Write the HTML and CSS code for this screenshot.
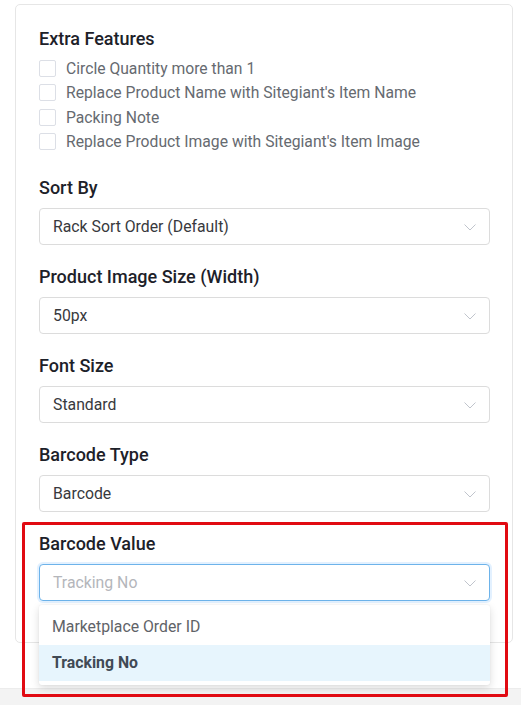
FILE: index.html
```html
<!DOCTYPE html>
<html>
<head>
<meta charset="utf-8">
<link rel="stylesheet" href="styles.css">
</head>
<body>
<div class="page">
  <div class="card">
    <div class="section first">
      <div class="label">Extra Features</div>
      <div class="checks">
        <label class="check"><span class="box"></span><span class="ctext">Circle Quantity more than 1</span></label>
        <label class="check"><span class="box"></span><span class="ctext">Replace Product Name with Sitegiant's Item Name</span></label>
        <label class="check"><span class="box"></span><span class="ctext">Packing Note</span></label>
        <label class="check"><span class="box"></span><span class="ctext">Replace Product Image with Sitegiant's Item Image</span></label>
      </div>
    </div>
    <div class="section">
      <div class="label">Sort By</div>
      <div class="select"><span class="value">Rack Sort Order (Default)</span><svg class="chev" width="12" height="12" viewBox="0 0 12 12"><path d="M0.5 3.5 L6 9 L11.5 3.5" fill="none" stroke="#c0c4cc" stroke-width="1"/></svg></div>
    </div>
    <div class="section">
      <div class="label">Product Image Size (Width)</div>
      <div class="select"><span class="value">50px</span><svg class="chev" width="12" height="12" viewBox="0 0 12 12"><path d="M0.5 3.5 L6 9 L11.5 3.5" fill="none" stroke="#c0c4cc" stroke-width="1"/></svg></div>
    </div>
    <div class="section">
      <div class="label">Font Size</div>
      <div class="select"><span class="value">Standard</span><svg class="chev" width="12" height="12" viewBox="0 0 12 12"><path d="M0.5 3.5 L6 9 L11.5 3.5" fill="none" stroke="#c0c4cc" stroke-width="1"/></svg></div>
    </div>
    <div class="section">
      <div class="label">Barcode Type</div>
      <div class="select"><span class="value">Barcode</span><svg class="chev" width="12" height="12" viewBox="0 0 12 12"><path d="M0.5 3.5 L6 9 L11.5 3.5" fill="none" stroke="#c0c4cc" stroke-width="1"/></svg></div>
    </div>
    <div class="section last">
      <div class="label">Barcode Value</div>
      <div class="select-wrap">
        <div class="select focused"><span class="value placeholder">Tracking No</span><svg class="chev" width="12" height="12" viewBox="0 0 12 12"><path d="M0.5 3.5 L6 9 L11.5 3.5" fill="none" stroke="#c0c4cc" stroke-width="1"/></svg></div>
        <div class="menu">
          <div class="option">Marketplace Order ID</div>
          <div class="option selected">Tracking No</div>
        </div>
      </div>
    </div>
  </div>
  <div class="footer"></div>
  <div class="highlight"></div>
</div>
</body>
</html>
```
FILE: styles.css
```css
* { box-sizing: border-box; }
html, body {
  margin: 0;
  padding: 0;
  background: #ffffff;
  font-family: Roboto, "Liberation Sans", Arial, sans-serif;
}
.page {
  position: relative;
  width: 521px;
  height: 705px;
  overflow: hidden;
  padding-top: 4px;
}
.card {
  margin-left: 15px;
  width: 498px;
  border: 1px solid #e6e6e6;
  border-radius: 5px;
  padding: 22px 22px 41px 23px;
  background: #fff;
}
.section { margin-top: 20px; }
.section.first { margin-top: 0; margin-bottom: 22px; }
.label {
  font-size: 18px;
  line-height: 24px;
  font-weight: 500;
  color: #1d2129;
  margin-bottom: 8px;
}
.section.first .label { margin-bottom: 5px; }
.checks { display: flex; flex-direction: column; }
.check {
  display: flex;
  align-items: center;
  height: 24.5px;
}
.box {
  width: 17px;
  height: 17px;
  border: 1px solid #dcdfe6;
  border-radius: 2px;
  background: #fff;
  margin-right: 10px;
  flex: none;
}
.ctext {
  font-size: 15.7px;
  color: #666a70;
}
.select {
  height: 37px;
  border: 1px solid #dcdcdc;
  border-radius: 4px;
  display: flex;
  align-items: center;
  justify-content: space-between;
  padding: 0 13px 0 13px;
  background: #fff;
}
.select .value {
  font-size: 15.8px;
  color: #38393d;
}
.select .placeholder { color: #b4b6bb; }
.select.focused {
  border-color: #6db3ea;
  box-shadow: 0 0 0 2px rgba(64, 158, 255, 0.15);
}
.chev { margin-top: 1px; }
.select-wrap { position: relative; }
.menu {
  position: absolute;
  left: 0;
  right: 0;
  top: 41px;
  background: #fff;
  padding: 4px 0;
  border-radius: 3px;
  box-shadow: 0 3px 8px rgba(0, 0, 0, 0.14), 0 0 2px rgba(0, 0, 0, 0.06);
  z-index: 5;
}
.option {
  height: 36px;
  line-height: 36px;
  padding: 0 13px;
  font-size: 15.8px;
  color: #5f6368;
}
.option.selected {
  background: #e7f5fd;
  color: #414a55;
  font-weight: 700;
}
.footer {
  position: absolute;
  left: 0;
  right: 0;
  top: 688px;
  height: 17px;
  background: #f3f3f3;
  border-top: 1px solid #ececec;
}
.highlight {
  position: absolute;
  left: 22px;
  top: 522px;
  width: 486px;
  height: 175px;
  border: 3.5px solid #e10a12;
  border-radius: 2px;
  z-index: 10;
}
```
